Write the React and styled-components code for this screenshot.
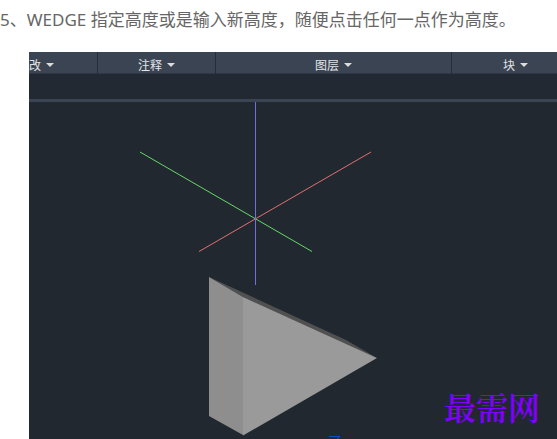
import React from "react";
import styled, { createGlobalStyle } from "styled-components";

const GlobalStyle = createGlobalStyle`
  body {
    margin: 0;
    background: #ffffff;
    font-family: "Noto Sans", "Noto Sans CJK SC", sans-serif;
  }
`;

const Article = styled.main`
  display: flex;
  flex-direction: column;
  gap: 12px;
  overflow: hidden;
`;

const Step = styled.p`
  margin: 0;
  height: 40px;
  line-height: 40px;
  font-size: 17px;
  color: #666666;
  white-space: nowrap;
`;

const Figure = styled.figure`
  position: relative;
  margin: 0 0 0 29px;
  background: #212830;
  overflow: hidden;
`;

const Ribbon = styled.nav`
  display: grid;
  grid-template-columns: 69fr 118fr 236fr 105fr;
  height: 22px;
  box-sizing: border-box;
  background: #3b4453;
  border-bottom: 1px solid #2f3744;
`;

const PanelButton = styled.button`
  display: flex;
  align-items: center;
  justify-content: ${(p) => (p.$start ? "flex-start" : "center")};
  gap: 5px;
  min-width: 0;
  padding: 4px 0 0;
  padding-left: ${(p) => (p.$inset ? "51px" : "0")};
  border: 0;
  border-right: ${(p) => (p.$last ? "0" : "1px solid #262d38")};
  background: transparent;
  color: #e2e4e8;
  font-family: "Noto Sans CJK SC", sans-serif;
  font-size: 12px;
  line-height: 18px;
  white-space: nowrap;
`;

const Caret = styled.span`
  border: 4px solid transparent;
  border-top-color: #dcdcdc;
  border-bottom: 0;
`;

const PanelBody = styled.div`
  height: 25px;
  background: #222933;
  border-bottom: 3px solid #3b4453;
`;

const Drawing = styled.svg`
  display: block;
  width: 100%;
  height: auto;
`;

const Watermark = styled.figcaption`
  position: absolute;
  right: 17px;
  bottom: 13px;
  color: #8000ff;
  font-family: "Noto Serif CJK SC", "Noto Sans CJK SC", serif;
  font-size: 32px;
  font-weight: 600;
  line-height: 40px;
`;

const panels = [
  { name: "改", start: true },
  { name: "注释" },
  { name: "图层" },
  { name: "块", start: true, inset: true, last: true },
];

export default function App() {
  return (
    <>
      <GlobalStyle />
      <Article>
        <Step>5、WEDGE 指定高度或是输入新高度，随便点击任何一点作为高度。</Step>
        <Figure>
          <Ribbon>
            {panels.map((p) => (
              <PanelButton key={p.name} type="button" $start={p.start} $inset={p.inset} $last={p.last}>
                {p.name}
                <Caret />
              </PanelButton>
            ))}
          </Ribbon>
          <PanelBody />
          <Drawing viewBox="0 0 528 337" role="img" aria-label="WEDGE">
            <path d="M170 149.500L342 50" stroke="#e07070" strokeWidth="1" />
            <path d="M111 50L283 149.500" stroke="#66d966" strokeWidth="1" />
            <path d="M226.500 0V183" stroke="#7070dc" strokeWidth="1" />
            <path d="M180 175L317 238L348 256L214 195Z" fill="#505050" />
            <path d="M180 175L214 195V333L180 314Z" fill="#8e8e8e" />
            <path d="M214 195L348 256L214 333.500Z" fill="#9a9a9a" />
            <path d="M300 334.500H311L308 337" fill="none" stroke="#0a50c8" strokeWidth="1" />
          </Drawing>
          <Watermark>最需网</Watermark>
        </Figure>
      </Article>
    </>
  );
}
